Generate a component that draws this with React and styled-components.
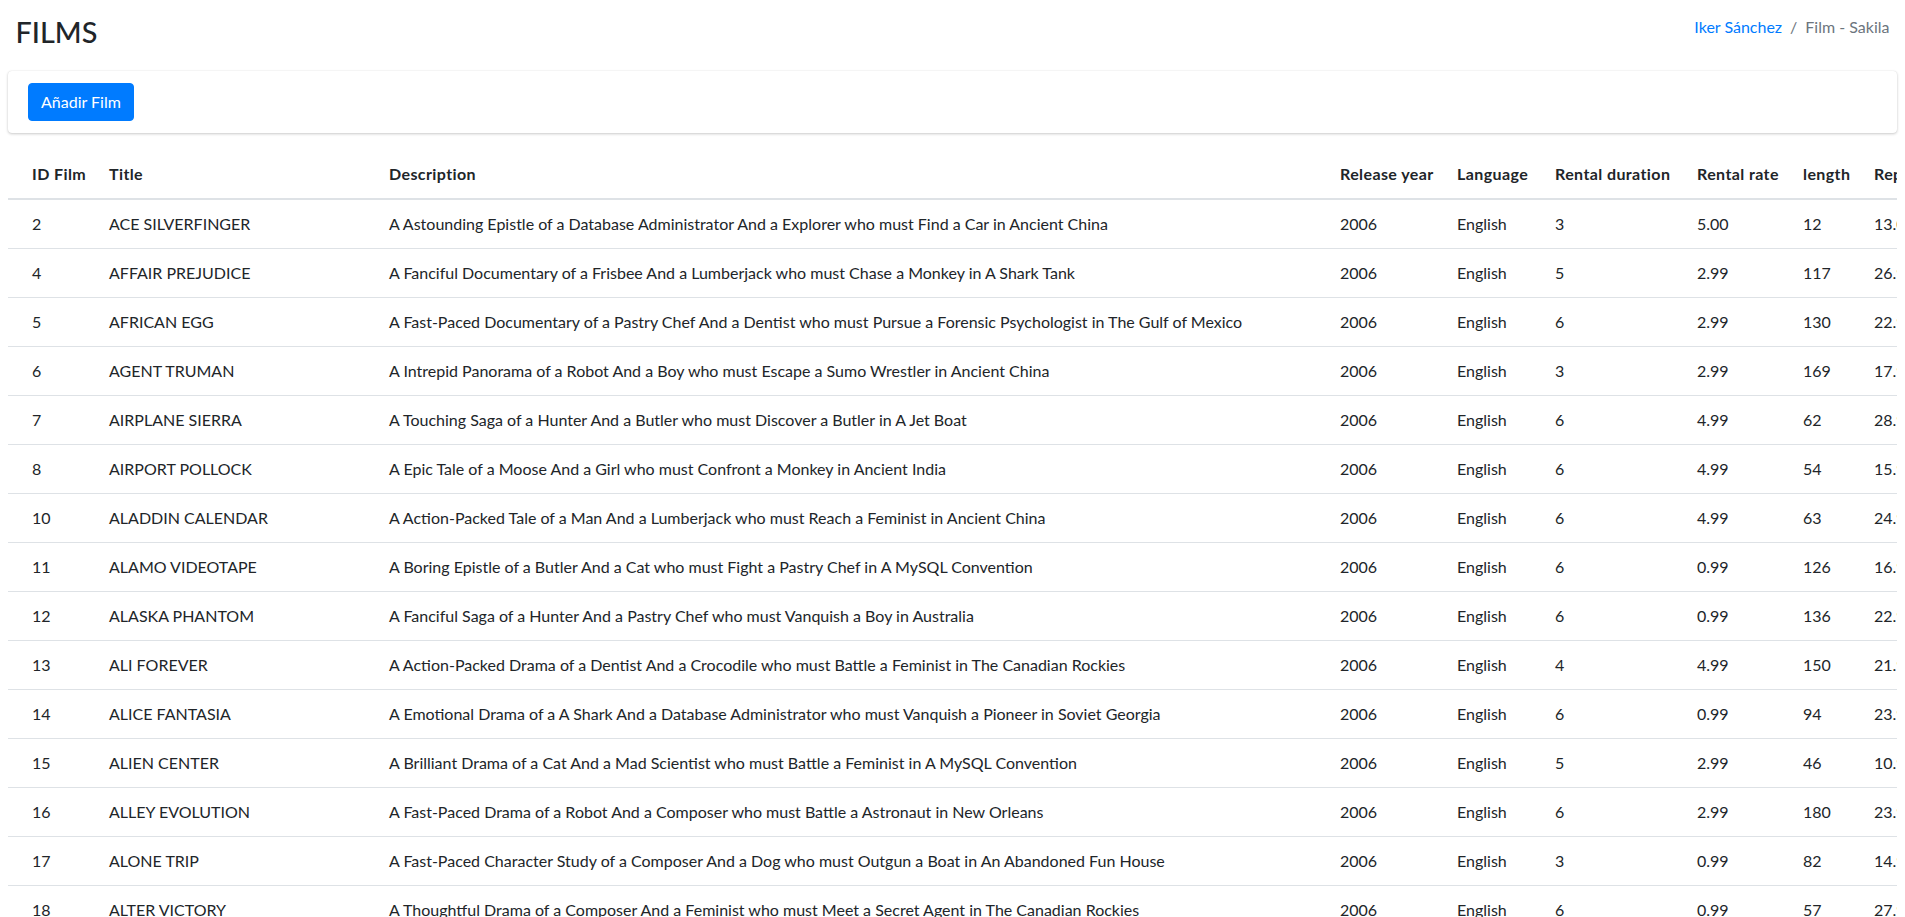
import styled, { createGlobalStyle } from 'styled-components';

const GlobalStyle = createGlobalStyle`
  html {
    scrollbar-width: none;
  }
  html::-webkit-scrollbar {
    display: none;
  }
  body {
    margin: 0;
    background: #fff;
    color: #212529;
    font-family: Lato, "Liberation Sans", sans-serif;
    font-size: 16px;
    line-height: 1.5;
  }
  *, *::before, *::after {
    box-sizing: border-box;
  }
`;

// Header
const ContentHeader = styled.div`
  display: flex;
  justify-content: space-between;
  align-items: flex-start;
  padding: 15px 15.5px 21.5px;
`;

const Title = styled.h1`
  margin: 0;
  font-size: 28.8px;
  font-weight: 500;
  line-height: 1.2;
  color: #212529;
`;

const Breadcrumb = styled.ol`
  display: flex;
  list-style: none;
  margin: 0;
  padding: 0;
  font-size: 16px;
  line-height: 24px;
`;

const Crumb = styled.li`
  color: ${(p) => (p.$active ? '#6c757d' : '#007bff')};

  &:not(:first-child)::before {
    content: '/';
    display: inline-block;
    padding: 0 8px;
    color: #6c757d;
  }
`;

const CrumbLink = styled.a`
  color: #007bff;
  text-decoration: none;
`;

// Card
const Card = styled.div`
  margin: 0 8px 17px;
  background: #fff;
  border-radius: 4px;
  box-shadow: 0 0 1px rgba(0, 0, 0, 0.125), 0 1px 3px rgba(0, 0, 0, 0.2);
`;

const CardHeader = styled.div`
  padding: 12px 20px;
`;

const Button = styled.button`
  display: inline-block;
  padding: 6px 12px;
  border: 1px solid #007bff;
  border-radius: 4px;
  background: #007bff;
  color: #fff;
  font-family: inherit;
  font-size: 16px;
  line-height: 24px;
  cursor: pointer;
`;

// Table
const TableWrap = styled.div`
  margin: 0 8px;
  overflow-x: auto;
`;

const Table = styled.table`
  table-layout: fixed;
  border-collapse: collapse;
  white-space: nowrap;
  color: #212529;
`;

const Th = styled.th`
  padding: 12px;
  text-align: left;
  font-weight: 700;
  letter-spacing: 0.4px;
  vertical-align: bottom;
  border-bottom: 2px solid #dee2e6;

  &:first-child {
    padding-left: 24px;
  }
`;

const Td = styled.td`
  padding: 12px;
  vertical-align: top;
  border-top: 1px solid #dee2e6;

  &:first-child {
    padding-left: 24px;
  }
`;

const columns = [
  ['ID Film', 89],
  ['Title', 280],
  ['Description', 951],
  ['Release year', 117],
  ['Language', 98],
  ['Rental duration', 142],
  ['Rental rate', 106],
  ['length', 71],
  ['Replacement cost', 160],
  ['Rating', 80],
  ['Special features', 320],
  ['Last update', 190],
];

const films = [
  [2, 'ACE SILVERFINGER', 'A Astounding Epistle of a Database Administrator And a Explorer who must Find a Car in Ancient China', 3, '5.00', 12, '13.00', 'G', 'Trailers,Deleted Scenes'],
  [4, 'AFFAIR PREJUDICE', 'A Fanciful Documentary of a Frisbee And a Lumberjack who must Chase a Monkey in A Shark Tank', 5, '2.99', 117, '26.99', 'G', 'Commentaries,Behind the Scenes'],
  [5, 'AFRICAN EGG', 'A Fast-Paced Documentary of a Pastry Chef And a Dentist who must Pursue a Forensic Psychologist in The Gulf of Mexico', 6, '2.99', 130, '22.99', 'G', 'Deleted Scenes'],
  [6, 'AGENT TRUMAN', 'A Intrepid Panorama of a Robot And a Boy who must Escape a Sumo Wrestler in Ancient China', 3, '2.99', 169, '17.99', 'PG', 'Deleted Scenes'],
  [7, 'AIRPLANE SIERRA', 'A Touching Saga of a Hunter And a Butler who must Discover a Butler in A Jet Boat', 6, '4.99', 62, '28.99', 'PG-13', 'Trailers,Deleted Scenes'],
  [8, 'AIRPORT POLLOCK', 'A Epic Tale of a Moose And a Girl who must Confront a Monkey in Ancient India', 6, '4.99', 54, '15.99', 'R', 'Trailers'],
  [10, 'ALADDIN CALENDAR', 'A Action-Packed Tale of a Man And a Lumberjack who must Reach a Feminist in Ancient China', 6, '4.99', 63, '24.99', 'NC-17', 'Trailers,Deleted Scenes'],
  [11, 'ALAMO VIDEOTAPE', 'A Boring Epistle of a Butler And a Cat who must Fight a Pastry Chef in A MySQL Convention', 6, '0.99', 126, '16.99', 'G', 'Commentaries,Behind the Scenes'],
  [12, 'ALASKA PHANTOM', 'A Fanciful Saga of a Hunter And a Pastry Chef who must Vanquish a Boy in Australia', 6, '0.99', 136, '22.99', 'PG', 'Commentaries,Deleted Scenes'],
  [13, 'ALI FOREVER', 'A Action-Packed Drama of a Dentist And a Crocodile who must Battle a Feminist in The Canadian Rockies', 4, '4.99', 150, '21.99', 'PG', 'Deleted Scenes,Behind the Scenes'],
  [14, 'ALICE FANTASIA', 'A Emotional Drama of a A Shark And a Database Administrator who must Vanquish a Pioneer in Soviet Georgia', 6, '0.99', 94, '23.99', 'NC-17', 'Trailers,Deleted Scenes,Behind the Scenes'],
  [15, 'ALIEN CENTER', 'A Brilliant Drama of a Cat And a Mad Scientist who must Battle a Feminist in A MySQL Convention', 5, '2.99', 46, '10.99', 'NC-17', 'Trailers,Commentaries,Behind the Scenes'],
  [16, 'ALLEY EVOLUTION', 'A Fast-Paced Drama of a Robot And a Composer who must Battle a Astronaut in New Orleans', 6, '2.99', 180, '23.99', 'NC-17', 'Trailers,Commentaries'],
  [17, 'ALONE TRIP', 'A Fast-Paced Character Study of a Composer And a Dog who must Outgun a Boat in An Abandoned Fun House', 3, '0.99', 82, '14.99', 'R', 'Trailers,Behind the Scenes'],
  [18, 'ALTER VICTORY', 'A Thoughtful Drama of a Composer And a Feminist who must Meet a Secret Agent in The Canadian Rockies', 6, '0.99', 57, '27.99', 'PG-13', 'Trailers,Behind the Scenes'],
];

const tableWidth = columns.reduce((sum, [, w]) => sum + w, 0);

export default function App() {
  return (
    <>
      <GlobalStyle />
      <ContentHeader>
        <Title>FILMS</Title>
        <Breadcrumb>
          <Crumb>
            <CrumbLink href="#">Iker Sánchez</CrumbLink>
          </Crumb>
          <Crumb $active>Film - Sakila</Crumb>
        </Breadcrumb>
      </ContentHeader>

      <Card>
        <CardHeader>
          <Button type="button">Añadir Film</Button>
        </CardHeader>
      </Card>

      <TableWrap>
        <Table style={{ width: tableWidth }}>
          <colgroup>
            {columns.map(([name, w]) => (
              <col key={name} style={{ width: w }} />
            ))}
          </colgroup>
          <thead>
            <tr>
              {columns.map(([name]) => (
                <Th key={name}>{name}</Th>
              ))}
            </tr>
          </thead>
          <tbody>
            {films.map(([id, title, desc, duration, rate, length, cost, rating, features]) => (
              <tr key={id}>
                <Td>{id}</Td>
                <Td>{title}</Td>
                <Td>{desc}</Td>
                <Td>2006</Td>
                <Td>English</Td>
                <Td>{duration}</Td>
                <Td>{rate}</Td>
                <Td>{length}</Td>
                <Td>{cost}</Td>
                <Td>{rating}</Td>
                <Td>{features}</Td>
                <Td>2006-02-15 05:03:42</Td>
              </tr>
            ))}
          </tbody>
        </Table>
      </TableWrap>
    </>
  );
}
